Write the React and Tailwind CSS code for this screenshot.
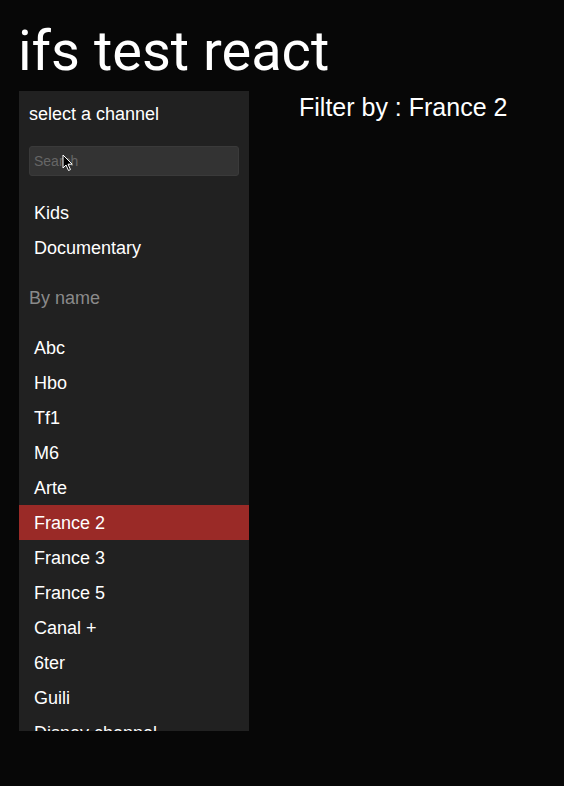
import React from 'react';

const categories = ['Kids', 'Documentary'];
const channels = [
  'Abc',
  'Hbo',
  'Tf1',
  'M6',
  'Arte',
  'France 2',
  'France 3',
  'France 5',
  'Canal +',
  '6ter',
  'Guili',
  'Disney channel',
];

const Cursor = () => (
  <svg
    className="absolute left-[33px] top-[8px] pointer-events-none"
    width="12"
    height="18"
    viewBox="0 0 12 18"
  >
    <path
      d="M1 1 L1 14 L4 11 L6.5 16.5 L8.5 15.6 L6 10.2 L10.2 10.2 Z"
      fill="#000"
      stroke="#fff"
      strokeWidth="1"
      strokeLinejoin="round"
    />
  </svg>
);

const App = () => {
  const selected = 'France 2';

  return (
    <div className="min-h-screen bg-[#070707] text-white font-['Liberation_Sans',Arial,sans-serif]">
      <h1 className="px-[18px] pt-[23px] text-[56px] leading-none font-['Roboto',sans-serif]">
        ifs test react
      </h1>
      <div className="flex gap-[50px] px-[19px] mt-[12px]">
        <aside className="w-[230px] h-[640px] shrink-0 overflow-hidden bg-[#212121]">
          <p className="px-[10px] pt-[13px] text-[18px] leading-[21px]">select a channel</p>
          <div className="relative mx-[10px] mt-[21px]">
            <input
              type="text"
              placeholder="Search"
              className="w-full h-[30px] rounded-[3px] border border-[#3a3a3a] bg-[#333333] px-[4px] text-[14px] text-white placeholder:text-[#666666] outline-none"
            />
            <Cursor />
          </div>
          <ul className="mt-[19px]">
            {categories.map((c) => (
              <li key={c} className="h-[35px] flex items-center pl-[15px] pt-[2px] text-[18px]">
                {c}
              </li>
            ))}
          </ul>
          <p className="mt-[15px] h-[35px] flex items-center px-[10px] pt-[2px] text-[18px] text-[#8a8a8a]">
            By name
          </p>
          <ul className="mt-[15px]">
            {channels.map((c) => (
              <li
                key={c}
                className={
                  c === selected
                    ? 'h-[35px] flex items-center pl-[15px] pt-[2px] text-[18px] bg-[#9a2a27]'
                    : 'h-[35px] flex items-center pl-[15px] pt-[2px] text-[18px]'
                }
              >
                {c}
              </li>
            ))}
          </ul>
        </aside>
        <main>
          <h2 className="text-[25px] leading-[27px] mt-[3px]">Filter by : {selected}</h2>
        </main>
      </div>
    </div>
  );
};

export default App;
